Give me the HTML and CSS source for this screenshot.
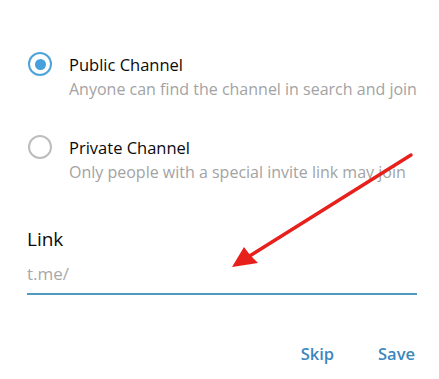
FILE: index.html
```html
<!DOCTYPE html>
<html>
<head>
<meta charset="utf-8">
<link rel="stylesheet" href="styles.css">
</head>
<body>
<div class="dialog">
  <div class="options">
    <div class="option">
      <span class="radio on"></span>
      <div class="option-text">
        <div class="option-title">Public Channel</div>
        <div class="option-sub">Anyone can find the channel in search and join</div>
      </div>
    </div>
    <div class="option">
      <span class="radio"></span>
      <div class="option-text">
        <div class="option-title">Private Channel</div>
        <div class="option-sub">Only people with a special invite link may join</div>
      </div>
    </div>
  </div>
  <div class="link-section">
    <div class="link-label">Link</div>
    <div class="link-field">t.me/</div>
  </div>
  <div class="actions">
    <span class="btn">Skip</span>
    <span class="btn">Save</span>
  </div>
  <svg class="arrow" width="439" height="379" viewBox="0 0 439 379">
    <line x1="411" y1="155" x2="248" y2="257" stroke="#e8201c" stroke-width="3.5" stroke-linecap="round"/>
    <polygon points="232,267 244,247 250,255 258,263" fill="#e8201c"/>
  </svg>
</div>
</body>
</html>
```
FILE: styles.css
```css
html, body {
  margin: 0;
  background: #ffffff;
}
body {
  font-family: "Open Sans", "Liberation Sans", sans-serif;
}
.dialog {
  position: relative;
  width: 439px;
  height: 379px;
  box-sizing: border-box;
  padding: 52px 22px 0 27px;
  overflow: hidden;
}
.option {
  display: flex;
  align-items: flex-start;
  gap: 17px;
}
.option + .option {
  margin-top: 33px;
}
.radio {
  width: 24px;
  height: 24px;
  box-sizing: border-box;
  margin-left: 1px;
  border: 2px solid #bdbdbd;
  border-radius: 50%;
  display: grid;
  place-items: center;
  flex: none;
}
.radio.on {
  border-color: #4ea3d8;
}
.radio.on::after {
  content: "";
  width: 11px;
  height: 11px;
  border-radius: 50%;
  background: #45a0dc;
}
.option-text {
  font-size: 16px;
  line-height: 25px;
  white-space: nowrap;
}
.option-title {
  font-size: 16.5px;
  color: #0a0a0a;
}
.option-sub {
  color: #a3a3a3;
}
.link-section {
  margin-top: 42px;
}
.link-label {
  font-size: 19px;
  line-height: 24px;
  color: #0a0a0a;
}
.link-field {
  margin-top: 10px;
  font-size: 17px;
  line-height: 25px;
  color: #a8a8a8;
  padding-bottom: 7px;
  border-bottom: 2px solid #4f9bbd;
  width: 390px;
}
.actions {
  margin-top: 49px;
  display: flex;
  justify-content: flex-end;
  gap: 44px;
  padding-right: 2px;
}
.btn {
  font-size: 16.5px;
  line-height: 20px;
  font-weight: 600;
  color: #3b87c0;
}
.arrow {
  position: absolute;
  left: 0;
  top: 0;
  pointer-events: none;
}
```
